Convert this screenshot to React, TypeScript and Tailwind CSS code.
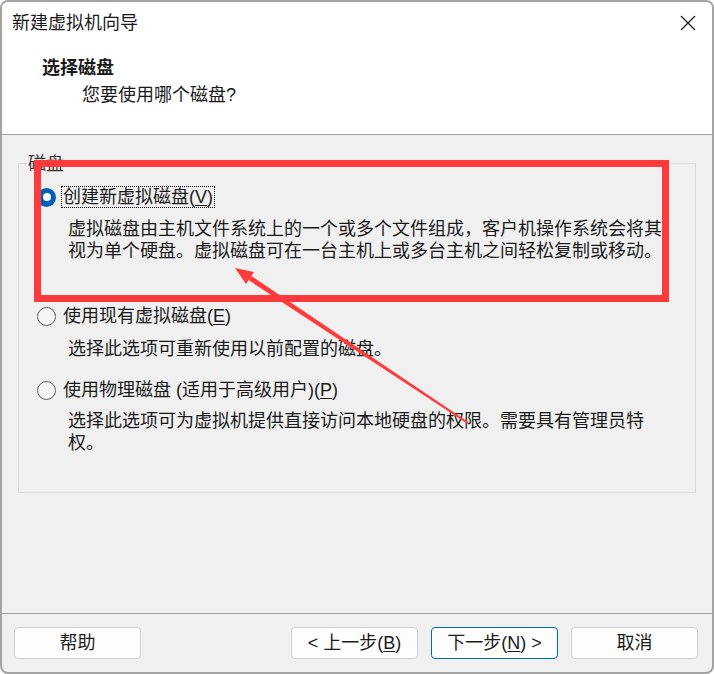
import React from "react";

const font = "font-['Liberation_Sans','Noto_Sans_CJK_SC',sans-serif]";

function Radio({ checked }: { checked?: boolean }) {
  if (checked) {
    return (
      <span className="flex h-[19px] w-[19px] shrink-0 items-center justify-center rounded-full bg-[#005fb8]">
        <span className="h-[8px] w-[8px] rounded-full bg-white" />
      </span>
    );
  }
  return <span className="h-[19px] w-[19px] shrink-0 rounded-full border border-[#5d5d5d] bg-[#f6f6f6]" />;
}

function Option({
  checked,
  focused,
  text,
  mnemonic,
  className,
}: {
  checked?: boolean;
  focused?: boolean;
  text: string;
  mnemonic: string;
  className: string;
}) {
  return (
    <div className={"flex h-[22px] items-center pl-[18px] " + className}>
      <Radio checked={checked} />
      <span
        className={
          "ml-[5px] whitespace-nowrap border px-[1px] leading-[20px] " +
          (focused ? "border-dotted border-black" : "border-transparent")
        }
      >
        {text}(<span className="underline underline-offset-2">{mnemonic}</span>)
      </span>
    </div>
  );
}

function WizardButton({ children, primary }: { children: React.ReactNode; primary?: boolean }) {
  return (
    <button
      className={
        "flex h-[32px] w-[127px] items-center justify-center rounded-[4px] border bg-[#fdfdfd] text-[18px] leading-[22px] text-[#1b1b1b] " +
        (primary ? "border-[#0067c0]" : "border-[#d0d0d0]")
      }
    >
      {children}
    </button>
  );
}

export default function App() {
  return (
    <div className={"relative h-[674px] w-[714px] bg-white text-[18px] text-[#1a1a1a] " + font}>
      <div className="flex h-full w-full flex-col overflow-hidden rounded-[8px] border-2 border-[#a3a3a3] bg-[#f0f0f0]">
        {/* header */}
        <div className="h-[133px] shrink-0 border-b border-[#a0a0a0] bg-white">
          <div className="flex items-center justify-between pl-[10px] pr-[16px] pt-[9px] leading-[24px]">
            <span>新建虚拟机向导</span>
            <svg width="16" height="16" viewBox="0 0 16 16" fill="none">
              <path d="M1 1 L15 15 M15 1 L1 15" stroke="#1a1a1a" strokeWidth="1.3" />
            </svg>
          </div>
          <div className="mt-[21px] pl-[40px] font-bold leading-[24px]">选择磁盘</div>
          <div className="mt-[3px] pl-[80px] leading-[24px]">您要使用哪个磁盘?</div>
        </div>

        {/* body */}
        <div className="h-[479px] shrink-0 border-b border-[#a0a0a0]">
          <div className="mx-[16px] mt-[28px] h-[330px] border border-[#dadada]">
            <div className="-mt-[11px] ml-[8px] w-fit bg-[#f0f0f0] px-[1px] leading-[22px] text-[#333]">磁盘</div>

            <Option checked focused text="创建新虚拟磁盘" mnemonic="V" className="mt-[11px]" />
            <div className="mt-[10px] whitespace-nowrap pl-[49px] leading-[22px]">
              <div>虚拟磁盘由主机文件系统上的一个或多个文件组成，客户机操作系统会将其</div>
              <div>视为单个硬盘。虚拟磁盘可在一台主机上或多台主机之间轻松复制或移动。</div>
            </div>

            <Option text="使用现有虚拟磁盘" mnemonic="E" className="mt-[43px]" />
            <div className="mt-[11px] whitespace-nowrap pl-[49px] leading-[22px]">
              选择此选项可重新使用以前配置的磁盘。
            </div>

            <Option text="使用物理磁盘 (适用于高级用户)" mnemonic="P" className="mt-[19px]" />
            <div className="mt-[9px] whitespace-nowrap pl-[49px] leading-[22px]">
              <div>选择此选项可为虚拟机提供直接访问本地硬盘的权限。需要具有管理员特</div>
              <div>权。</div>
            </div>
          </div>
        </div>

        {/* footer */}
        <div className="flex flex-1 items-start gap-[13px] pl-[12px] pr-[14px] pt-[13px]">
          <WizardButton>帮助</WizardButton>
          <div className="ml-auto" />
          <WizardButton>
            &lt; 上一步(<span className="underline underline-offset-2">B</span>)
          </WizardButton>
          <WizardButton primary>
            下一步(<span className="underline underline-offset-2">N</span>) &gt;
          </WizardButton>
          <WizardButton>取消</WizardButton>
        </div>
      </div>

      {/* annotation: red box */}
      <div className="pointer-events-none absolute left-[34px] top-[160px] h-[142px] w-[635px] border-[7px] border-[#ff3a3a]" />

      {/* annotation: arrow */}
      <svg className="pointer-events-none absolute left-0 top-0" width="714" height="674" viewBox="0 0 714 674">
        <polygon points="248.6,280.1 251.4,275.9 468.6,422.2 467.4,423.8" fill="#ff3a3a" />
        <polygon points="235,268 246,284 254,272" fill="#ff3a3a" />
      </svg>
    </div>
  );
}
